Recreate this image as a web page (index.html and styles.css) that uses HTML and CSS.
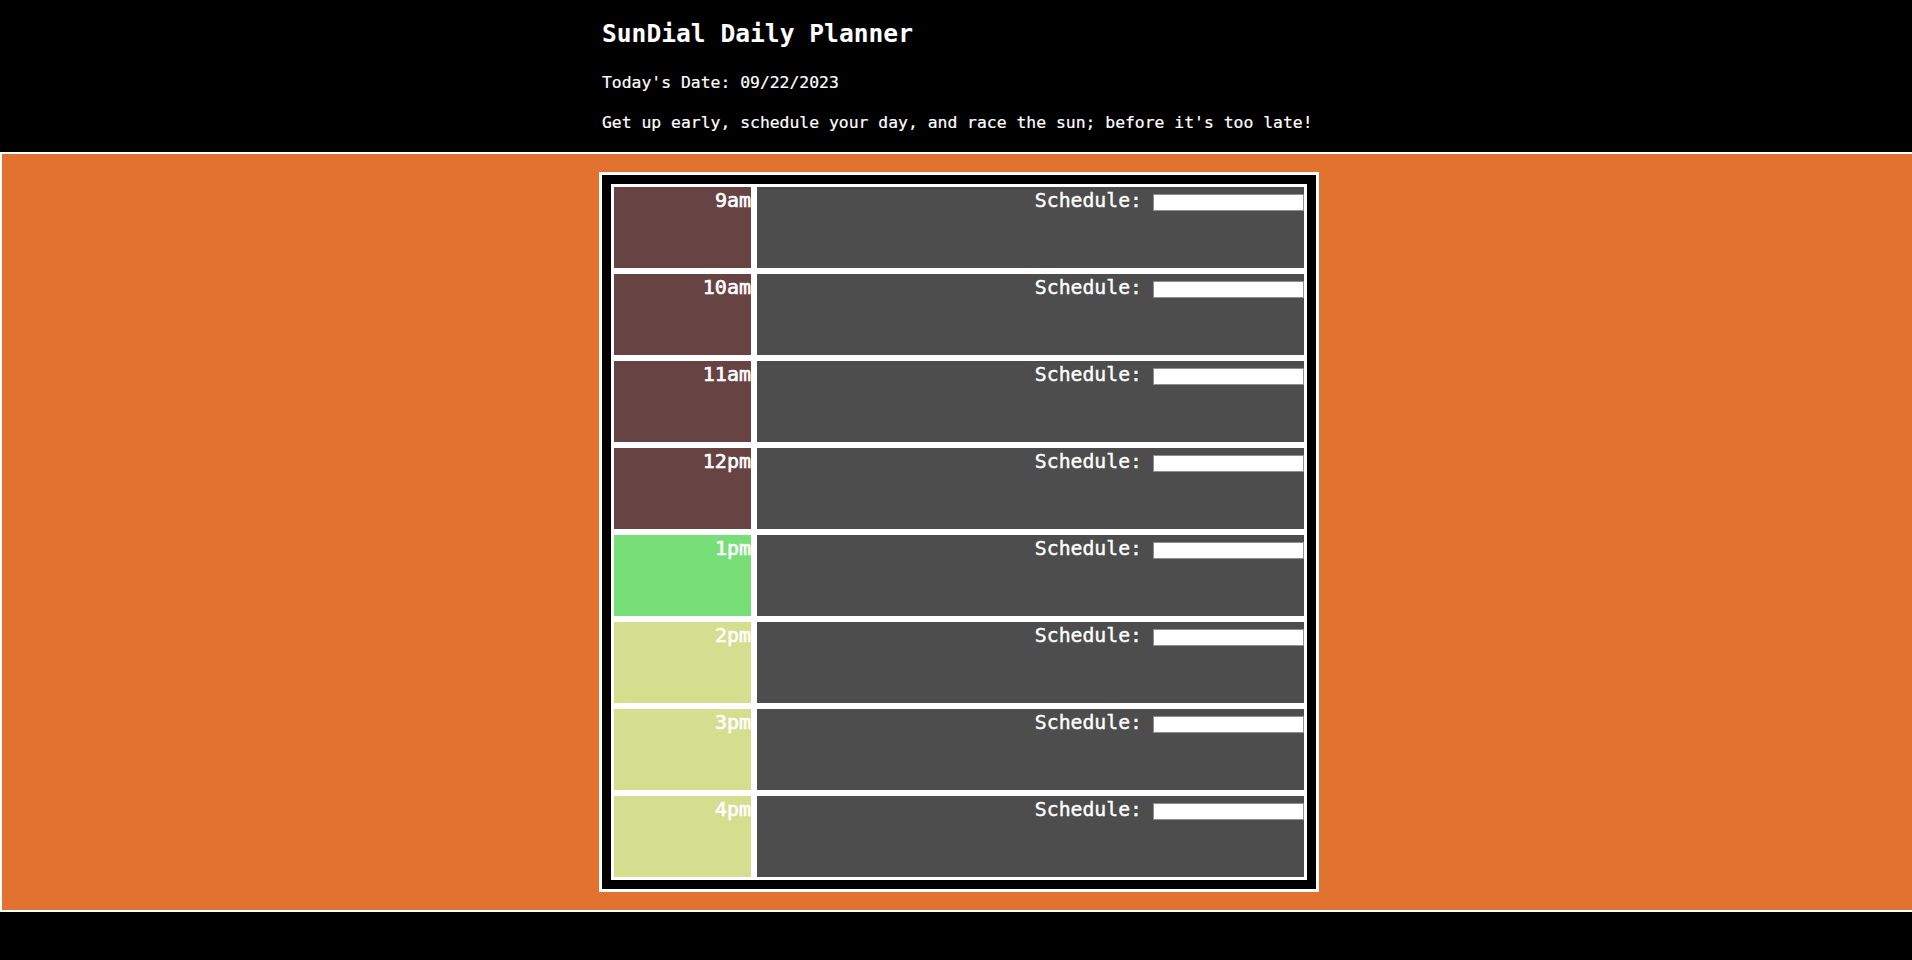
FILE: index.html
```html
<!DOCTYPE html>
<html lang="en">
<head>
<meta charset="utf-8">
<title>SunDial Daily Planner</title>
<link rel="stylesheet" href="styles.css">
</head>
<body>
<header class="header">
  <div class="header-inner">
    <h1 class="title">SunDial Daily Planner</h1>
    <p class="date">Today's Date: 09/22/2023</p>
    <p class="tagline">Get up early, schedule your day, and race the sun; before it's too late!</p>
  </div>
</header>
<main class="stage">
  <div class="planner">
    <div class="grid">
      <div class="hour past">9am</div>
      <div class="desc"><span class="label">Schedule:</span><input class="entry" type="text"></div>
      <div class="hour past">10am</div>
      <div class="desc"><span class="label">Schedule:</span><input class="entry" type="text"></div>
      <div class="hour past">11am</div>
      <div class="desc"><span class="label">Schedule:</span><input class="entry" type="text"></div>
      <div class="hour past">12pm</div>
      <div class="desc"><span class="label">Schedule:</span><input class="entry" type="text"></div>
      <div class="hour present">1pm</div>
      <div class="desc"><span class="label">Schedule:</span><input class="entry" type="text"></div>
      <div class="hour future">2pm</div>
      <div class="desc"><span class="label">Schedule:</span><input class="entry" type="text"></div>
      <div class="hour future">3pm</div>
      <div class="desc"><span class="label">Schedule:</span><input class="entry" type="text"></div>
      <div class="hour future">4pm</div>
      <div class="desc"><span class="label">Schedule:</span><input class="entry" type="text"></div>
    </div>
  </div>
</main>
</body>
</html>
```

FILE: styles.css
```css
* {
  box-sizing: border-box;
}

html, body {
  margin: 0;
  padding: 0;
  background: #000;
}

body {
  font-family: "DejaVu Sans Mono", "Liberation Mono", monospace;
  color: #fff;
  height: 960px;
  overflow: hidden;
}

.header {
  height: 152px;
  padding-left: 6px;
  padding-top: 19px;
}

.header-inner {
  width: 720px;
  margin: 0 auto;
  padding-left: 3px;
}

.title {
  margin: 0;
  font-size: 24.6px;
  line-height: 30px;
  font-weight: bold;
}

.date {
  margin: 24px 0 0;
  font-size: 16.4px;
  line-height: 20px;
  -webkit-text-stroke: 0.2px #fff;
}

.tagline {
  margin: 20px 0 0;
  font-size: 16.4px;
  line-height: 20px;
  -webkit-text-stroke: 0.2px #fff;
}

.stage {
  background: #e2722f;
  border-top: 2px solid #fff;
  border-left: 2px solid #fff;
  border-bottom: 2px solid #fff;
  padding: 18px 0 18px 4px;
  display: flex;
  justify-content: center;
}

.planner {
  width: 720px;
  border: 3px solid #fff;
  background: #000;
  padding: 9px;
}

.grid {
  display: grid;
  grid-template-columns: 143px 553px;
  grid-auto-rows: 87px;
}

.hour {
  border: 3px solid #fff;
  text-align: right;
  font-size: 20px;
  line-height: 27px;
  color: #fff;
  -webkit-text-stroke: 0.6px #fff;
}

.past {
  background: #674343;
}

.present {
  background: #78de78;
}

.future {
  background: #d4de8f;
}

.desc {
  border: 3px solid #fff;
  background: #4d4d4d;
  display: flex;
  justify-content: flex-end;
  align-items: flex-start;
  gap: 11px;
}

.label {
  font-size: 19.8px;
  line-height: 27px;
  -webkit-text-stroke: 0.4px #fff;
}

.entry {
  margin: 7px 0 0;
  width: 151px;
  height: 17px;
  padding: 0;
  border: 1px solid #8f8f8f;
  background: #fff;
  outline: none;
}
```
